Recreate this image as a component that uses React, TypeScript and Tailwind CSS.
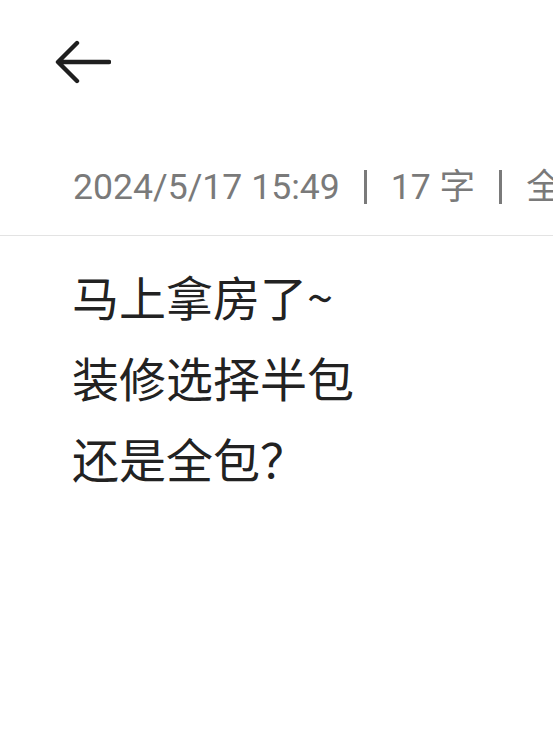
const BODY = ['马上拿房了~', '装修选择半包', '还是全包？'];

function BackArrow() {
  return (
    <svg width="56" height="44" viewBox="0 0 56 44" fill="none" aria-hidden="true">
      <path
        d="M54 22H4M22 3L3 22l19 19"
        stroke="#1f1f1f"
        strokeWidth="4.4"
        strokeLinecap="round"
        strokeLinejoin="round"
      />
    </svg>
  );
}

function Sep() {
  return <div className="h-[34px] w-[3px] shrink-0 bg-[#7a7a7a]" />;
}

export default function App() {
  return (
    <div className="h-[737px] w-full overflow-hidden bg-white font-['Roboto','Noto_Sans_CJK_SC',sans-serif]">
      {/* Top bar */}
      <div className="flex h-[124px] items-center pl-[55px]">
        <BackArrow />
      </div>

      {/* Meta: time, word count, category */}
      <div className="mt-[39px] flex h-[48px] items-center gap-[24px] whitespace-nowrap pl-[73px] text-[35.6px] leading-[48px] text-[#7a7a7a]">
        <span>2024/5/17 15:49</span>
        <Sep />
        <span>17 字</span>
        <Sep />
        <span>全包</span>
      </div>

      <div className="mt-[24px] h-px w-full bg-[#e3e3e3]" />

      {/* Note body */}
      <div className="pt-[19px] pl-[72px] font-['Noto_Sans_CJK_SC',sans-serif] text-[47px] leading-[81px] text-[#222]">
        {BODY.map((line) => (
          <div key={line}>{line}</div>
        ))}
      </div>
    </div>
  );
}
